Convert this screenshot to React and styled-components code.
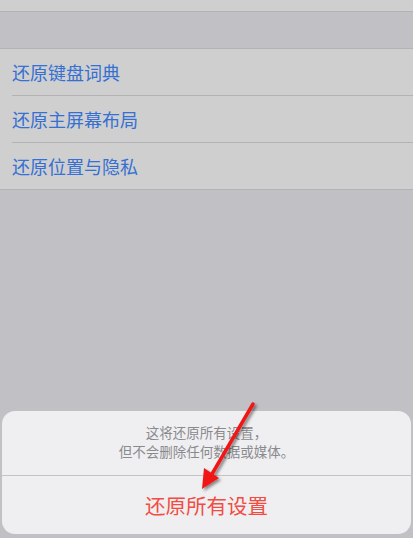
import React from 'react';
import styled, {createGlobalStyle} from 'styled-components';

const GlobalStyle = createGlobalStyle`
    html, body {
        margin: 0;
        padding: 0;
    }
    body {
        font-family: "Noto Sans CJK SC", "Noto Sans", sans-serif;
        background: #c1c0c5;
    }
`;

const Screen = styled.div`
    position: relative;
    width: 413px;
    height: 538px;
    display: flex;
    flex-direction: column;
    background: #c1c0c5;
    overflow: hidden;
`;

const TopCell = styled.div`
    height: 11px;
    background: #cfcfcf;
    border-bottom: 1px solid #b3b3b5;
`;

const Group = styled.div`
    margin-top: 36px;
    background: #cfcfcf;
    border-top: 1px solid #b3b3b5;
    border-bottom: 1px solid #b3b3b5;
`;

const Row = styled.div`
    height: 46px;
    display: flex;
    align-items: center;
    margin-left: 12px;
    font-size: 18px;
    color: #3570d2;
    border-top: ${p => (p.first ? 'none' : '1px solid #b3b3b5')};
`;

const Spacer = styled.div`
    flex: 1;
`;

const Sheet = styled.div`
    margin: 0 2px 4px;
    background: #efeff1;
    border-radius: 13px;
    overflow: hidden;
`;

const SheetTitle = styled.div`
    height: 65px;
    display: flex;
    flex-direction: column;
    align-items: center;
    justify-content: center;
    font-size: 13.5px;
    line-height: 19px;
    color: #8a8a8e;
    border-bottom: 1px solid #c3c3c6;
    padding-bottom: 2px;
    box-sizing: border-box;
`;

const SheetButton = styled.div`
    height: 58px;
    display: flex;
    align-items: center;
    justify-content: center;
    font-size: 20.5px;
    color: #f24c43;
`;

// red annotation arrow drawn over the sheet
const Arrow = styled.svg`
    position: absolute;
    left: 0;
    top: 0;
    pointer-events: none;
`;

const items = ['还原键盘词典', '还原主屏幕布局', '还原位置与隐私'];

const App = () => (
    <Screen>
        <GlobalStyle />
        <TopCell />
        <Group>
            {items.map((t, i) => (
                <Row key={t} first={i === 0}>
                    {t}
                </Row>
            ))}
        </Group>
        <Spacer />
        <Sheet>
            <SheetTitle>
                <div>这将还原所有设置，</div>
                <div>但不会删除任何数据或媒体。</div>
            </SheetTitle>
            <SheetButton>还原所有设置</SheetButton>
        </Sheet>
        <Arrow width="413" height="538" viewBox="0 0 413 538">
            <defs>
                <filter id="sh" x="-50%" y="-50%" width="200%" height="200%">
                    <feDropShadow dx="2" dy="2" stdDeviation="1.5" floodColor="#000" floodOpacity="0.45" />
                </filter>
            </defs>
            <g filter="url(#sh)">
                <line x1="253" y1="404" x2="212" y2="474" stroke="#f01818" strokeWidth="3.5" strokeLinecap="round" />
                <polygon points="202,489 204,468 219,478" fill="#f01818" />
            </g>
        </Arrow>
    </Screen>
);

export default App;
